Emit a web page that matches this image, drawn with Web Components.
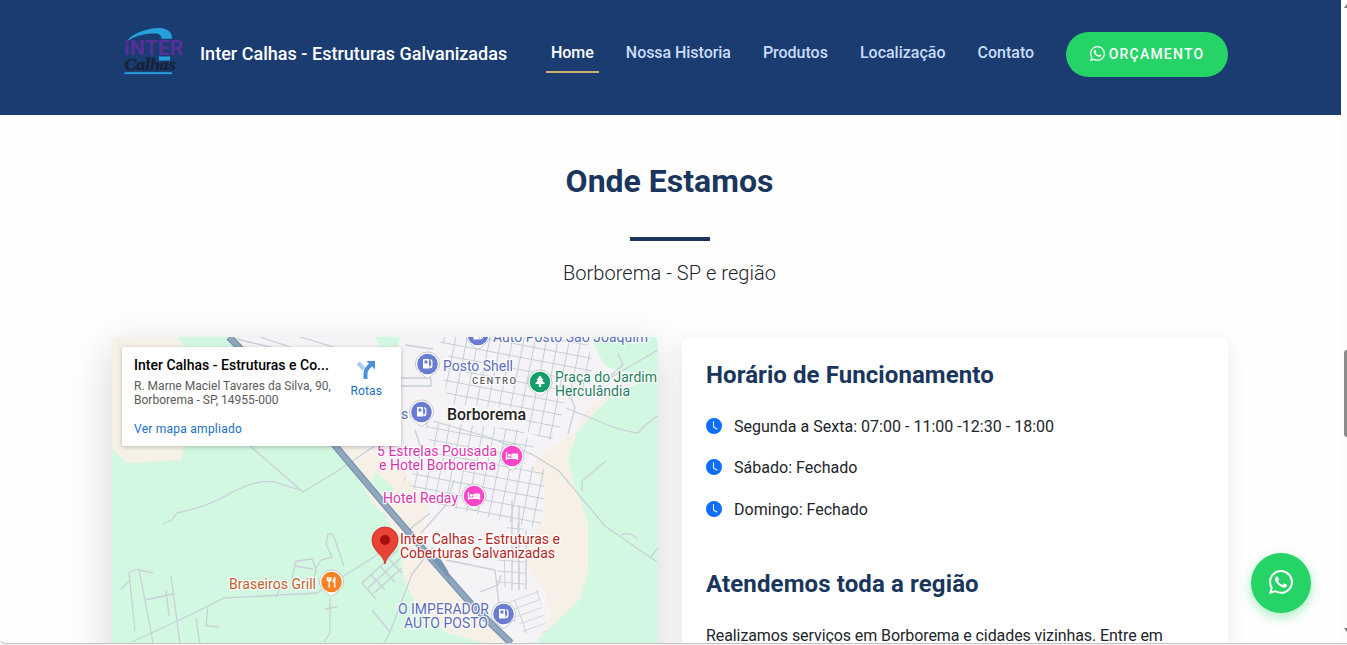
<!DOCTYPE html>
<html lang="pt-BR">
<head>
<meta charset="utf-8">
<title>Inter Calhas - Estruturas Galvanizadas</title>
<style>
html,body{margin:0;padding:0;height:645px;overflow:hidden;background:#f3f3f3}
body{font-family:Roboto,"Liberation Sans",sans-serif;color:#212529;font-size:16px;line-height:24px}
</style>
</head>
<body>
<site-page>
  <site-header slot="header">
    <nav-link active style="--ls:-.03px">Home</nav-link>
    <nav-link style="--ls:-.05px">Nossa Historia</nav-link>
    <nav-link style="--ls:-.01px">Produtos</nav-link>
    <nav-link style="--ls:0px">Localização</nav-link>
    <nav-link style="--ls:0px">Contato</nav-link>
  </site-header>
  <section-title heading="Onde Estamos">Borborema - SP e região</section-title>
  <content-row>
    <location-map></location-map>
    <info-panel>
      <panel-heading>Horário de Funcionamento</panel-heading>
      <hours-item>Segunda a Sexta: 07:00 - 11:00 -12:30 - 18:00</hours-item>
      <hours-item>Sábado: Fechado</hours-item>
      <hours-item>Domingo: Fechado</hours-item>
      <panel-heading class="second">Atendemos toda a região</panel-heading>
      <panel-text>Realizamos serviços em Borborema e cidades vizinhas. Entre em contato para um orçamento.</panel-text>
    </info-panel>
  </content-row>
</site-page>
<script>
const define = (name, html, setup) => customElements.define(name, class extends HTMLElement {
  constructor(){ super(); this.attachShadow({mode:'open'}); }
  connectedCallback(){ this.shadowRoot.innerHTML = html; if (setup) setup(this, this.shadowRoot); }
});

define('whats-icon', `<style>:host{display:inline-block;width:16px;height:16px}svg{display:block;width:100%;height:100%}</style>
<svg viewBox="0 0 16 16" fill="currentColor"><path d="M13.601 2.326A7.85 7.85 0 0 0 7.994 0C3.627 0 .068 3.558.064 7.926c0 1.399.366 2.76 1.057 3.965L0 16l4.204-1.102a7.9 7.9 0 0 0 3.79.965h.004c4.368 0 7.926-3.558 7.93-7.93A7.9 7.9 0 0 0 13.6 2.326zM7.994 14.521a6.6 6.6 0 0 1-3.356-.92l-.24-.144-2.494.654.666-2.433-.156-.251a6.56 6.56 0 0 1-1.007-3.505c0-3.626 2.957-6.584 6.591-6.584a6.56 6.56 0 0 1 4.66 1.931 6.56 6.56 0 0 1 1.928 4.66c-.004 3.639-2.961 6.592-6.592 6.592m3.615-4.934c-.197-.099-1.17-.578-1.353-.646-.182-.065-.315-.099-.445.099-.133.197-.513.646-.627.775-.114.133-.232.148-.43.05-.197-.1-.836-.308-1.592-.985-.59-.525-.985-1.175-1.103-1.372-.114-.198-.011-.304.088-.403.087-.088.197-.232.296-.346.1-.114.133-.198.198-.33.065-.134.034-.248-.015-.347-.05-.099-.445-1.076-.612-1.47-.16-.389-.323-.335-.445-.34-.114-.007-.247-.007-.38-.007a.73.73 0 0 0-.529.247c-.182.198-.691.677-.691 1.654s.71 1.916.81 2.049c.098.133 1.394 2.132 3.383 2.992.47.205.84.326 1.129.418.475.152.904.129 1.246.08.38-.058 1.171-.48 1.338-.943.164-.464.164-.86.114-.943-.049-.084-.182-.133-.38-.232"/></svg>`);

define('brand-logo', `<style>:host{display:block;width:60px;height:50px}svg{display:block;overflow:visible}text{font-family:Roboto,sans-serif}</style>
<svg width="60" height="50" viewBox="124 27 60 50">
<path d="M128 39.5C136 31.5 150 27.6 160 28c8 .3 12.3 4.500 12 10.800h-10.500c0-3-2-5.300-6-5.300-9 0-19 1.500-26 6.500z" fill="#24a0dc"/>
<rect x="159" y="56.500" width="11" height="4" fill="#24a0dc"/>
<text x="124" y="54.800" font-size="20" font-weight="700" fill="#56309a" textLength="59.500" lengthAdjust="spacingAndGlyphs">iNTER</text>
<text x="124.500" y="70" font-size="16.500" font-weight="700" font-style="italic" style="font-family:'Liberation Serif',serif" fill="#152338" stroke="#152338" stroke-width=".5" textLength="51" lengthAdjust="spacingAndGlyphs">Calhas</text>
<rect x="124.500" y="72.200" width="47.500" height="1.900" fill="#2a9fe0"/>
</svg>`);

define('nav-link', `<style>
:host{display:block;position:relative;color:#c9dcfa;font-weight:500;font-size:16px;line-height:24px;letter-spacing:var(--ls);white-space:nowrap}
:host([active]){color:#fff}
:host([active])::after{content:"";position:absolute;left:-5px;right:-5px;top:30px;height:2px;background:#cdb06e}
</style><slot></slot>`);

define('site-header', `<style>
:host{display:flex;box-sizing:border-box;height:115px;background:#1a3c70;padding:27px 113px 0 124px;align-items:flex-start}
.name{font-weight:500;font-size:18px;line-height:24px;color:#fff;margin:15px 0 0 16px;width:307px;white-space:nowrap;letter-spacing:.02px}
nav{display:flex;gap:32px;margin:14px 0 0 44px;flex:1}
.cta{box-sizing:border-box;width:162px;height:45px;margin-top:5px;border-radius:23px;background:#25d366;color:#fff;display:flex;align-items:center;justify-content:center;gap:5px;font-size:14px;font-weight:500;letter-spacing:1.200px;white-space:nowrap}
whats-icon{width:15px;height:15px;margin:-3px -1px 0 0}
.cta span{margin-top:-1px}
</style>
<brand-logo></brand-logo><span class="name">Inter Calhas - Estruturas Galvanizadas</span>
<nav><slot></slot></nav><div class="cta"><whats-icon></whats-icon><span>ORÇAMENTO</span></div>`);

define('section-title', `<style>
:host{display:flex;flex-direction:column;align-items:center;padding:46px 2px 0 0}
h2{margin:0;font-size:32px;line-height:40px;font-weight:700;color:#1a365d}
i{display:block;width:80px;height:4px;background:#1a365d;margin:36px 0 17px}
p{margin:0;font-size:20px;line-height:30px;font-weight:300;color:#212529;letter-spacing:.04px}
</style><h2></h2><i></i><p><slot></slot></p>`, (el, r) => { r.querySelector('h2').textContent = el.getAttribute('heading'); });

define('content-row', `<style>:host{display:grid;grid-template-columns:546px 546px;gap:24px;padding:49px 0 0 112px}</style><slot></slot>`);

define('info-panel', `<style>:host{display:block;box-sizing:border-box;height:400px;background:#fff;border-radius:8px;padding:22px 24px;box-shadow:0 5px 20px rgba(0,0,0,.08);position:relative}</style><slot></slot>`);
define('panel-heading', `<style>:host{display:block;font-size:24px;line-height:32px;font-weight:700;color:#1a365d;margin-bottom:22px;white-space:nowrap;letter-spacing:.08px}:host(.second){margin-top:46px;margin-bottom:24px;letter-spacing:.12px}</style><slot></slot>`);
define('panel-text', `<style>:host{display:block;line-height:24px;width:480px;letter-spacing:-.085px}</style><slot></slot>`);
define('hours-item', `<style>:host{display:flex;align-items:center;gap:12px;height:25.500px;margin-bottom:16px;white-space:nowrap;letter-spacing:.02px}svg{display:block;flex:none}span{margin-top:2px}</style>
<svg width="16" height="16" viewBox="0 0 16 16" fill="#0d6efd"><path d="M16 8A8 8 0 1 1 0 8a8 8 0 0 1 16 0M8 3.500a.5.5 0 0 0-1 0V9a.5.5 0 0 0 .252.434l3.500 2a.5.5 0 0 0 .496-.868L8 8.710z"/></svg><span><slot></slot></span>`);

define('place-card', `<style>
:host{display:flex;justify-content:space-between;box-sizing:border-box;width:279px;height:99px;background:#fff;border-radius:2px;box-shadow:0 1px 4px rgba(0,0,0,.25);padding:9px 19px 0 12px}
.t{font-size:14px;font-weight:500;line-height:18px;color:#000;white-space:nowrap;letter-spacing:.01px}
.a{font-size:12px;line-height:14px;color:#5b5b5b;margin-top:5px;width:206px;white-space:nowrap;letter-spacing:.02px}
.l{font-size:12px;line-height:14px;color:#1a6fc4;margin-top:15px;letter-spacing:.25px}
.r{display:flex;flex-direction:column;align-items:center;font-size:12px;line-height:14px;color:#1a6fc4;padding-top:4px;letter-spacing:.1px}
svg{margin-bottom:4px}
</style>
<div><div class="t">Inter Calhas - Estruturas e Co...</div><div class="a">R. Marne Maciel Tavares da Silva, 90,<br>Borborema - SP, 14955-000</div><div class="l">Ver mapa ampliado</div></div>
<div class="r"><svg width="20" height="20" viewBox="0 0 20 20"><path d="M2 3l6 6" stroke="#a8cdf2" stroke-width="4" fill="none"/><path d="M9.500 19v-6c0-3 1-4 3-6l2.500-2.500" stroke="#4b8fdc" stroke-width="4" fill="none"/><path d="M10.500 1H19v8.500z" fill="#4b8fdc"/></svg><span>Rotas</span></div>`);

const glyphs = {
  fuel:'<path d="M-4.500-5h6v9.500h-6z" fill="#fff"/><path d="M-3-3.500h3v3h-3z" fill="#6a7bd2"/><path d="M2.500 1.500v2q1.800.5 1.800-1.500v-5l-1.500-1.500" fill="none" stroke="#fff" stroke-width="1.300"/>',
  tree:'<path d="M0-6.500L3.500-2H2l3 4H1.200v3h-2.400V2H-5l3-4h-1.500z" fill="#fff"/>',
  bed:'<path d="M-5.500-4v8M5.500 4V-1.500h-5.500V2M-5.500 2.300h11" fill="none" stroke="#fff" stroke-width="1.400"/><path d="M0-2.200h5.500V2H0z" fill="#fff" opacity=".85"/><circle cx="-2.700" cy="-.6" r="1.400" fill="#fff"/>',
  food:'<path d="M-4-5v4M-2.300-5v4M-.6-5v4M-4-1.500h3.400M-2.300-1v6.500M3.200-5v10.500" fill="none" stroke="#fff" stroke-width="1.300"/><path d="M3.600-5.500q-2.600 2-2.400 6h2.400z" fill="#fff"/>'
};
const pin = (x,y,color,g) => `<g transform="translate(${x} ${y})"><path d="M-12 0a12 12 0 1 1 24 0c0 6-6 9.500-9.500 13q-2.500 2.600-5 0C-6 9.500-12 6-12 0z" fill="#fff" stroke="#8f959c" stroke-opacity=".55" stroke-width=".9"/><circle r="10.300" fill="${color}"/>${glyphs[g]}</g>`;
const label = (x,y,w,t,c,s=14,wt=400) => `<text x="${x}" y="${y}" textLength="${w}" fill="${c}" font-size="${s}" font-weight="${wt}">${t}</text>`;
const blue='#6a7bd2', blueText='#5a6cb8', pink='#fb45c8', pinkText='#d936ae', red='#b3261e', green='#1f8060';

define('location-map', `<style>
:host{display:block;position:relative;height:400px;border-radius:5px;box-shadow:0 12px 44px rgba(0,0,0,.17)}
svg{display:block;border-radius:5px}
place-card{position:absolute;left:10px;top:10px}
text{font-family:Roboto,sans-serif;paint-order:stroke;stroke:#fff;stroke-opacity:.85;stroke-width:2.500px;stroke-linejoin:round}
</style>
<svg width="546" height="400" viewBox="112 337 546 400">
<defs>
<pattern id="g1" width="11" height="12" patternUnits="userSpaceOnUse" patternTransform="matrix(1 .19 -.2 1 432 340)"><path d="M0 0H11M0 0V12" fill="none" stroke="#c3ced9" stroke-width="1.900"/></pattern>
<pattern id="g2" width="14" height="11" patternUnits="userSpaceOnUse" patternTransform="matrix(1 .08 .02 1 504 560)"><path d="M0 0H14M0 0V11" fill="none" stroke="#c6cfda" stroke-width="1.700"/></pattern>
<pattern id="g3" width="24" height="8" patternUnits="userSpaceOnUse" patternTransform="matrix(.94 -.34 .34 .94 514 600)"><path d="M0 0H24M0 0V8" fill="none" stroke="#c6cfda" stroke-width="1.700"/></pattern>
</defs>
<path d="M112 337H658V737H112z" fill="#d3f8e2"/>
<path d="M112 337h66l7 12v97l-4 14-54 3-15-14z" fill="#f5f1e6"/>
<path d="M230 337H375l12 20H592l14 28 5 12-20 19-14 17-9 25 5 22 15 42v50l-8 27-41 40-46 6-46-12-30-26-13-28-5-38-13-25-14-13-15-31-70-65z" fill="#f6f0e6"/>
<path d="M235 337H375l6 15 9-15H591l12 26 7 5 27 6v10l-29 11-19 11-14 27-35 22-8 14 13 18v26l-15 27-4 26 18 24 7 25-14 27-25 2-30-32-26-31-26-27-8-22 6-28-22-30-67-41-70-70z" fill="#f5f3f5"/>
<path d="M376 337h25l-10 24zM376 472l19 17-8 9-16-16z" fill="#d3f8e2"/>
<g fill="url(#g1)"><path d="M433 337H585l8 25-4 31-25 8-4 30-10 10-27-11-2-22-72-4-7-32 9-22z"/><path d="M425 421l97 9 12 17-30 14 40 8v36l-4 24-43-10-64-16-31-24 31-17z"/></g>
<path d="M507 523h17v44h-17zM497 560h28v28h-28z" fill="url(#g2)"/>
<path d="M508 602l30-12 9 42-23 2z" fill="url(#g3)"/>
<g fill="none" stroke="#c8d0d8" stroke-width="1.300">
<path d="M229 337l20 5 26 6M260 337l30 10M300 337l40 12M250 446l53 46 33-20 43-29M162 524l10-4 5-7q30-6 54-20 26-14 43-11l29 9"/>
<path d="M132 642l58-27 34-17q60-3 93-5l63-40 50-40M129 572l6 59M129 572l10-3 14 74M121 589l8-8M140 570l13 3M145 600l28-6M171 576l9 68M166 590l3 26M208 606l-2 20 13 1M196 618l4 26M276 597l8-16M292 579l4-18 16-2 4 10-4 20M316 568l5-8 11-3-6-13 2-10q5-2 7 6l9 26M295 566l18 3M330 598v35l-6 9M325 609l12-2"/>
<path d="M362 583l36-33M368 588l35-32M374 593l28-25M362 583l14 16M371 575l14 15M380 566l15 16M388 558l14 15M372 610l18 22q10-26 22-58l21-27M390 632l-6 11"/>
<path d="M566 408l30 12q20 10 42 13 9-11 20-17M570 395l5 13-7 26M618 353l5 12-20 17 55-32M530 453l29 18 46 55 52 36M582 491v-10l24-20M621 535q10-4 16 4M650 558l8-10"/>
<path d="M401 378h30M401 386h30v-8M405 345l28 4M415 430l6 18-2 12M433 421l55 16 43 17M454 480l-8 25-25 28M446 560l49 10 4 35 12 4M480 592l18-7 3-10M508 610l7 12M512 500v90M519 505v85M526 530v60"/>
</g>
<path d="M229 337l103 105 53 63 50 58 38 43 38 37" fill="none" stroke="#7895b6" stroke-width="7"/><path d="M229 337l103 105 53 63 50 58 38 43 38 37" fill="none" stroke="#90a7bc" stroke-width="4.500"/>
<path d="M430 557l10 1 8 13 2 9z" fill="#7895b6"/>
${pin(478,335,blue,'fuel')}${pin(427.500,364,blue,'fuel')}${pin(421.500,412,blue,'fuel')}${pin(540,382,'#129d69','tree')}${pin(512,456,pink,'bed')}${pin(474,496,pink,'bed')}${pin(331.500,582,'#f58427','food')}${pin(503.500,614,blue,'fuel')}
${label(493,342,155,'Auto Posto São Joaquim',blueText)}
${label(443,371,70,'Posto Shell',blueText)}
${label(472,383.500,44,'CENTRO','#5e6268',9.500,500)}
${label(447,419.500,79,'Borborema','#222',16,500)}
${label(555,382,102,'Praça do Jardim',green)}${label(555,396,75,'Herculândia',green)}
${label(401,419,6.500,'s',blueText)}
${label(377,456,120,'5 Estrelas Pousada',pinkText)}${label(379,470,117,'e Hotel Borborema',pinkText)}
${label(383,503,75,'Hotel Reday',pinkText)}
${label(400,544,160,'Inter Calhas - Estruturas e',red)}${label(400,558,155,'Coberturas Galvanizadas',red)}
${label(229,589,87,'Braseiros Grill','#c0622a')}
${label(398,614,91,'O IMPERADOR',blueText)}${label(404,628,84,'AUTO POSTO',blueText)}
<path d="M385 564c-1-9-13-13-13-24a13 13 0 0 1 26 0c0 11-12 15-13 24z" fill="#ea4335" stroke="#c5221f" stroke-width=".8"/><circle cx="385" cy="540" r="5" fill="#a50e0e"/>
</svg><place-card></place-card>`);

define('float-chat', `<style>:host{display:flex;align-items:center;justify-content:center;width:60px;height:60px;border-radius:50%;background:#25d366;color:#fff;box-shadow:0 4px 12px rgba(37,211,102,.4)}whats-icon{width:24px;height:24px;margin-top:-2px}</style><whats-icon></whats-icon>`);

define('scroll-rail', `<style>:host{display:block;background:#fcfcfc}svg{display:block}</style>
<svg width="6" height="643"><rect x="3" y="350" width="10" height="87" rx="3" fill="#8b8b8b"/><path d="M3 628h6l-3 4z" fill="#777"/><path d="M3 8h6l-3-4z" fill="#777"/></svg>`);

define('site-page', `<style>
:host{display:grid;grid-template-columns:1341px 6px;width:1347px;height:643px;overflow:hidden;position:relative;border-bottom:1px solid #c4c4c4;border-bottom-left-radius:6px;background:#fefefe}
main{height:643px;overflow:hidden}
float-chat{position:absolute;left:1251px;top:553px}
</style><main><slot name="header"></slot><slot></slot></main><scroll-rail></scroll-rail><float-chat></float-chat>`);
</script>
</body>
</html>
